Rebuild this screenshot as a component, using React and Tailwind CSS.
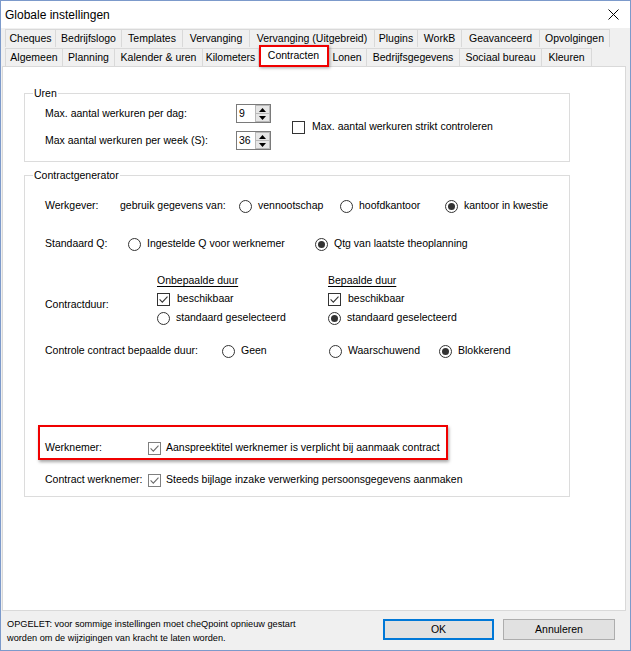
import React from 'react'

const tabsTop = [
  ['Cheques', 'w-[51px]'],
  ['Bedrijfslogo', 'w-[66px]'],
  ['Templates', 'w-[61px]'],
  ['Vervanging', 'w-[67px]'],
  ['Vervanging (Uitgebreid)', 'w-[125px]'],
  ['Plugins', 'w-[43px]'],
  ['WorkB', 'w-[44px]'],
  ['Geavanceerd', 'w-[78px]'],
  ['Opvolgingen', 'w-[70px]'],
]

const tabsBottom = [
  ['Algemeen', 'w-[58px]'],
  ['Planning', 'w-[52px]'],
  ['Kalender & uren', 'w-[88px]'],
  ['Kilometers', 'w-[56px]'],
  ['Contracten', 'w-[69px]', true],
  ['Lonen', 'w-[39px]'],
  ['Bedrijfsgegevens', 'w-[93px]'],
  ['Sociaal bureau', 'w-[82px]'],
  ['Kleuren', 'w-[50px]'],
]

const Check = ({ checked = false, soft = false }) => (
  <span className={soft ? 'w-[13px] h-[13px] shrink-0 border border-[#7f7f7f] bg-white flex items-center justify-center' : 'w-[13px] h-[13px] shrink-0 border border-[#333333] bg-white flex items-center justify-center'}>
    {checked && (
      <svg width="11" height="11" viewBox="0 0 11 11">
        <path d="M1.6 5.4 L4.3 8.1 L9.5 2.6" fill="none" stroke={soft ? '#6a6a6a' : '#333333'} strokeWidth="1.1" />
      </svg>
    )}
  </span>
)

const Radio = ({ checked = false }) => (
  <span className="w-[13px] h-[13px] shrink-0 rounded-full border border-[#333333] bg-white flex items-center justify-center">
    {checked && <span className="w-[7px] h-[7px] rounded-full bg-[#333333]" />}
  </span>
)

const RadioOpt = ({ checked = false, label, className = '' }) => (
  <div className={`flex items-center gap-[6px] ${className}`}>
    <Radio checked={checked} />
    <span>{label}</span>
  </div>
)

const Spin = ({ value }) => (
  <div className="w-[35px] h-[19px] border border-[#7a7a7a] bg-white flex">
    <div className="flex-1 pl-[2px] flex items-center">{value}</div>
    <div className="w-[15px] flex flex-col">
      <div className="flex-1 border border-[#b9b9b9] bg-[#e6e6e6] flex items-center justify-center">
        <svg width="7" height="4" viewBox="0 0 7 4"><path d="M3.5 0 L7 4 L0 4 Z" fill="#000" /></svg>
      </div>
      <div className="flex-1 border border-t-0 border-[#b9b9b9] bg-[#e6e6e6] flex items-center justify-center">
        <svg width="7" height="4" viewBox="0 0 7 4"><path d="M0 0 L7 0 L3.5 4 Z" fill="#000" /></svg>
      </div>
    </div>
  </div>
)

const Tab = ({ label, w, selected }) => {
  if (selected) {
    return (
      <div className={`${w} relative z-10 -mt-[2px] h-[21px] bg-white border-x border-t border-[#d9d9d9] flex items-center justify-center`}>
        {label}
        <div className="absolute left-[-1px] top-[-1px] right-[-2px] bottom-[-1px] border-2 border-[#f00000] shadow-[1px_1px_3px_rgba(0,0,0,0.35)]" />
      </div>
    )
  }
  return (
    <div className={`${w} h-[18px] bg-[#f0f0f0] border-t border-r border-[#d9d9d9] first:border-l flex items-center justify-center`}>
      {label}
    </div>
  )
}

export default function App() {
  return (
    <div className="w-[631px] h-[651px] bg-[#f0f0f0] border border-[#7c9acb] flex flex-col text-[10.5px] text-black font-['Liberation_Sans',Arial,sans-serif] overflow-hidden">
      {/* title bar */}
      <div className="h-[27px] bg-white flex items-center justify-between pl-[4px] pr-[11px] text-[12px]">
        <span>Globale instellingen</span>
        <svg width="11" height="11" viewBox="0 0 11 11">
          <path d="M0.5 0.5 L10.5 10.5 M10.5 0.5 L0.5 10.5" stroke="#000" strokeWidth="1" />
        </svg>
      </div>

      {/* tabs */}
      <div className="pt-[1px] pl-[4px]">
        <div className="flex">
          {tabsTop.map(([label, w]) => <Tab key={label} label={label} w={w} />)}
        </div>
        <div className="flex items-end">
          {tabsBottom.map(([label, w, sel]) => <Tab key={label} label={label} w={w} selected={sel} />)}
        </div>
      </div>

      {/* page */}
      <div className="ml-[1px] w-[624px] h-[545px] border border-[#d9d9d9] bg-white pl-[21px]">
        <fieldset className="mt-[19px] w-[546px] border border-[#dcdcdc] p-0">
          <legend className="ml-[8px] px-[1px] leading-[14px]">Uren</legend>
          <div className="pl-[20px] pb-[7px] flex items-center">
            <div className="flex flex-col">
              <div className="h-[27px] flex items-center">
                <span className="w-[191px]">Max. aantal werkuren per dag:</span>
                <Spin value="9" />
              </div>
              <div className="h-[27px] flex items-center">
                <span className="w-[191px]">Max aantal werkuren per week (S):</span>
                <Spin value="36" />
              </div>
            </div>
            <div className="ml-[21px] flex items-center gap-[7px]">
              <Check />
              <span>Max. aantal werkuren strikt controleren</span>
            </div>
          </div>
        </fieldset>

        <fieldset className="mt-[6px] w-[546px] border border-[#dcdcdc] p-0">
          <legend className="ml-[8px] px-[1px] leading-[14px]">Contractgenerator</legend>
          <div className="pl-[20px] pb-[6px]">
            <div className="mt-[14px] h-5 flex items-center">
              <span className="w-[75px]">Werkgever:</span>
              <span className="w-[119px]">gebruik gegevens van:</span>
              <RadioOpt label="vennootschap" className="w-[101px]" />
              <RadioOpt label="hoofdkantoor" className="w-[105px]" />
              <RadioOpt checked label="kantoor in kwestie" />
            </div>

            <div className="mt-[18px] h-5 flex items-center">
              <span className="w-[83px]">Standaard Q:</span>
              <RadioOpt label="Ingestelde Q voor werknemer" className="w-[187px]" />
              <RadioOpt checked label="Qtg van laatste theoplanning" />
            </div>

            <div className="mt-[18px] flex">
              <div className="w-[112px] pt-[25px] leading-[14px]">Contractduur:</div>
              <div className="w-[171px] flex flex-col">
                <div className="h-[18px] flex items-center underline underline-offset-2">Onbepaalde duur</div>
                <div className="h-[18px] flex items-center gap-[7px]"><Check checked /><span>beschikbaar</span></div>
                <RadioOpt label="standaard geselecteerd" className="h-[20px]" />
              </div>
              <div className="flex flex-col">
                <div className="h-[18px] flex items-center underline underline-offset-2">Bepaalde duur</div>
                <div className="h-[18px] flex items-center gap-[7px]"><Check checked /><span>beschikbaar</span></div>
                <RadioOpt checked label="standaard geselecteerd" className="h-[20px]" />
              </div>
            </div>

            <div className="mt-[13px] h-5 flex items-center">
              <span className="w-[177px]">Controle contract bepaalde duur:</span>
              <RadioOpt label="Geen" className="w-[107px]" />
              <RadioOpt label="Waarschuwend" className="w-[110px]" />
              <RadioOpt checked label="Blokkerend" />
            </div>

            <div className="relative mt-[77px] h-5 flex items-center">
              <div className="absolute left-[-7px] top-[-13px] w-[410px] h-[35px] border-2 border-[#f00000] shadow-[1px_2px_3px_rgba(0,0,0,0.35)]" />
              <span className="w-[103px]">Werknemer:</span>
              <div className="flex items-center gap-[5px]">
                <Check checked soft />
                <span>Aanspreektitel werknemer is verplicht bij aanmaak contract</span>
              </div>
            </div>

            <div className="mt-[12px] h-5 flex items-center">
              <span className="w-[103px] whitespace-nowrap">Contract werknemer:</span>
              <div className="flex items-center gap-[5px]">
                <Check checked soft />
                <span>Steeds bijlage inzake verwerking persoonsgegevens aanmaken</span>
              </div>
            </div>
          </div>
        </fieldset>
      </div>

      {/* footer */}
      <div className="flex items-start pl-[6px] pt-[6px]">
        <div className="w-[376px] text-[9.2px] leading-[14px] whitespace-nowrap">
          <div>OPGELET: voor sommige instellingen moet cheQpoint opnieuw gestart</div>
          <div>worden om de wijzigingen van kracht te laten worden.</div>
        </div>
        <button className="mt-[2px] w-[111px] h-[21px] border-2 border-[#0078d7] bg-[#e1e1e1] flex items-center justify-center">OK</button>
        <button className="ml-[9px] mt-[2px] w-[112px] h-[21px] border border-[#adadad] bg-[#e1e1e1] flex items-center justify-center">Annuleren</button>
      </div>
    </div>
  )
}
